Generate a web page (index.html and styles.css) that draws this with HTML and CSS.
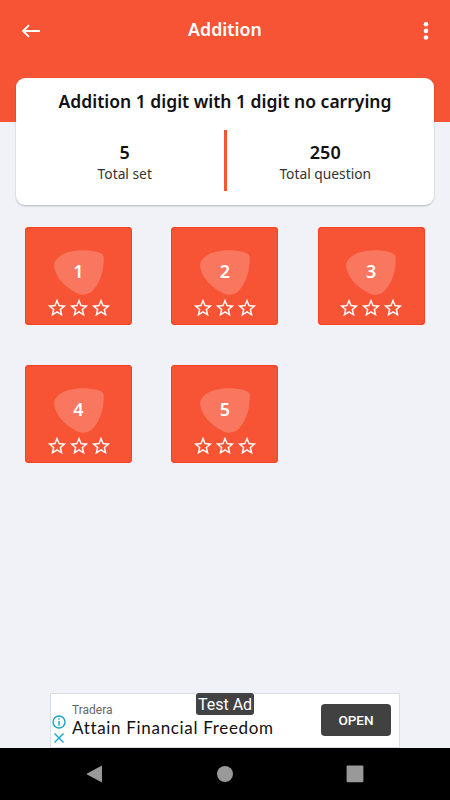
FILE: index.html
```html
<!DOCTYPE html>
<html lang="en">
<head>
    <meta charset="UTF-8">
    <meta name="viewport" content="width=device-width, initial-scale=1.0">
    <title>Addition</title>
    <link rel="stylesheet" href="styles.css">
</head>
<body>
    <svg class="sprites" width="0" height="0">
        <symbol id="blob" viewBox="0 0 149 135">
            <path d="M0 47C0 34 7 24 24 14C48 0 106-4 138 9C147 13 149 17 149 27C148 67 137 97 117 121C104 136 84 138 66 128C30 110 2 78 0 47Z"/>
        </symbol>
        <symbol id="star" viewBox="0 0 24 24">
            <path d="M22 9.24l-7.19-.62L12 2 9.19 8.63 2 9.24l5.46 4.73L5.82 21 12 17.27 18.18 21l-1.63-7.03L22 9.24zM12 15.4l-3.76 2.27 1-4.28-3.32-2.88 4.38-.38L12 6.1l1.71 4.04 4.38.38-3.32 2.88 1 4.28L12 15.4z"/>
        </symbol>
    </svg>

    <header class="header">
        <svg class="back" width="18" height="14" viewBox="0 0 18 14">
            <path d="M18 7H1.5M7 1.2L1.2 7L7 12.8"/>
        </svg>
        <h1>Addition</h1>
        <svg class="more" width="6" height="20" viewBox="0 0 6 20">
            <circle cx="3" cy="3.2" r="2.3"/>
            <circle cx="3" cy="9.9" r="2.3"/>
            <circle cx="3" cy="16.5" r="2.3"/>
        </svg>
    </header>

    <section class="summary">
        <h2>Addition 1 digit with 1 digit no carrying</h2>
        <div class="totals">
            <div class="total">
                <strong>5</strong>
                <span>Total set</span>
            </div>
            <div class="divider"></div>
            <div class="total">
                <strong>250</strong>
                <span>Total question</span>
            </div>
        </div>
    </section>

    <main class="sets">
        <div class="set">
            <div class="number"><svg><use href="#blob"/></svg><span>1</span></div>
            <div class="stars"><svg><use href="#star"/></svg><svg><use href="#star"/></svg><svg><use href="#star"/></svg></div>
        </div>
        <div class="set">
            <div class="number"><svg><use href="#blob"/></svg><span>2</span></div>
            <div class="stars"><svg><use href="#star"/></svg><svg><use href="#star"/></svg><svg><use href="#star"/></svg></div>
        </div>
        <div class="set">
            <div class="number"><svg><use href="#blob"/></svg><span>3</span></div>
            <div class="stars"><svg><use href="#star"/></svg><svg><use href="#star"/></svg><svg><use href="#star"/></svg></div>
        </div>
        <div class="set">
            <div class="number"><svg><use href="#blob"/></svg><span>4</span></div>
            <div class="stars"><svg><use href="#star"/></svg><svg><use href="#star"/></svg><svg><use href="#star"/></svg></div>
        </div>
        <div class="set">
            <div class="number"><svg><use href="#blob"/></svg><span>5</span></div>
            <div class="stars"><svg><use href="#star"/></svg><svg><use href="#star"/></svg><svg><use href="#star"/></svg></div>
        </div>
    </main>

    <aside class="ad">
        <div class="ad-icons">
            <svg width="14" height="14" viewBox="0 0 14 14">
                <circle cx="7" cy="7" r="6"/>
                <path d="M7 6v4.8M7 3.2v1.6"/>
            </svg>
            <svg width="14" height="14" viewBox="0 0 14 14">
                <path d="M2.5 2.5l9 9M11.5 2.5l-9 9"/>
            </svg>
        </div>
        <div class="ad-text">
            <span class="ad-brand">Tradera</span>
            <span class="ad-title">Attain Financial Freedom</span>
        </div>
        <button class="ad-open">OPEN</button>
        <span class="ad-badge">Test Ad</span>
    </aside>

    <nav class="navbar">
        <svg width="18" height="18" viewBox="0 0 18 18"><path d="M16 0.6V17.4L1 9.6Q0.4 9 1 8.4Z"/></svg>
        <svg width="18" height="18" viewBox="0 0 18 18"><circle cx="9" cy="9" r="8"/></svg>
        <svg width="18" height="18" viewBox="0 0 18 18"><rect x="0.6" y="0.4" width="16.8" height="16.8" rx="1"/></svg>
    </nav>
</body>
</html>
```

FILE: styles.css
```css
* {
    margin: 0;
    padding: 0;
    box-sizing: border-box;
}

body {
    display: flex;
    flex-direction: column;
    height: 800px;
    overflow: hidden;
    background: #f1f2f8;
    font-family: "Noto Sans", "Open Sans", sans-serif;
}

.sprites {
    position: absolute;
}

.header {
    display: grid;
    grid-template-columns: 18px 1fr 18px;
    align-items: start;
    height: 122px;
    padding: 17px 22px 0;
    background: #f75335;
    color: #fff;
}

.header h1 {
    font-size: 17.8px;
    line-height: 24px;
    font-weight: 600;
    text-align: center;
}

.back {
    margin-top: 7px;
    fill: none;
    stroke: #fff;
    stroke-width: 1.9;
}

.more {
    justify-self: end;
    margin: 4px -1px 0 0;
    fill: #fff;
}

.summary {
    height: 127px;
    margin: -44px 16px 0;
    padding-top: 10px;
    border-radius: 9px;
    background: #fff;
    box-shadow: 0 1px 2px rgba(0, 0, 0, 0.25);
    color: #111;
    text-align: center;
}

.summary h2 {
    font-size: 17.5px;
    line-height: 26px;
    font-weight: 600;
    white-space: nowrap;
}

.totals {
    display: flex;
    margin-top: 16px;
}

.total {
    flex: 1;
    display: flex;
    flex-direction: column;
    padding-top: 11px;
}

.total:first-child {
    padding-left: 10px;
}

.total:last-child {
    padding-right: 10px;
}

.total strong {
    font-size: 18px;
    line-height: 22px;
    font-weight: 600;
}

.total span {
    font-size: 13.8px;
    line-height: 21px;
    color: #333;
}

.divider {
    width: 3px;
    height: 61px;
    background: #f75335;
}

.sets {
    flex: 1;
    display: grid;
    grid-template-columns: repeat(3, 107px);
    grid-auto-rows: 98px;
    align-content: start;
    gap: 40px 39.3px;
    padding: 22px 25px 0;
}

.set {
    display: flex;
    flex-direction: column;
    align-items: center;
    padding-top: 23px;
    border-radius: 4px;
    background: #f75335;
    box-shadow: inset 0 0 0 1px #f9401f;
}

.number {
    display: grid;
    place-items: center;
    width: 50px;
    height: 45px;
}

.number svg,
.number span {
    grid-area: 1 / 1;
}

.number svg {
    width: 50px;
    height: 45px;
    fill: #f9775f;
}

.number span {
    margin-top: -4px;
    font-size: 18px;
    line-height: 22px;
    font-weight: 600;
    color: #fff;
}

.stars {
    display: flex;
    margin-top: 2px;
}

.stars svg {
    width: 22px;
    height: 22px;
    fill: #fff;
}

.ad {
    position: relative;
    display: flex;
    width: 350px;
    height: 55px;
    margin: 0 auto;
    border: 1px solid #dcdde2;
    background: #fff;
}

.ad-icons {
    display: flex;
    flex-direction: column;
    gap: 2px;
    padding: 21px 0 0 1px;
}

.ad-icons svg {
    fill: none;
    stroke: #17a5c6;
    stroke-width: 1.4;
}

.ad-text {
    display: flex;
    flex: 1;
    flex-direction: column;
    padding: 9px 0 0 6px;
}

.ad-brand {
    font: 12px/14px Roboto, sans-serif;
    color: #666;
}

.ad-title {
    font: 17px/22px Lato, sans-serif;
    letter-spacing: 0.68px;
    font-variant-ligatures: none;
    color: #111;
    white-space: nowrap;
}

.ad-open {
    width: 70px;
    height: 32px;
    margin: 10px 8px 0 0;
    border: 0;
    border-radius: 4px;
    background: #414141;
    color: #fff;
    font: 500 13.5px Roboto, sans-serif;
}

.ad-badge {
    position: absolute;
    left: 145px;
    top: -1px;
    width: 58px;
    height: 22px;
    border-radius: 3px;
    background: #424242;
    color: #fff;
    font: 16px/24px Roboto, sans-serif;
    text-align: center;
    white-space: nowrap;
}

.navbar {
    display: flex;
    justify-content: space-between;
    height: 52px;
    padding: 17px 86px 0;
    background: #000;
}

.navbar svg {
    fill: #999;
}
```
